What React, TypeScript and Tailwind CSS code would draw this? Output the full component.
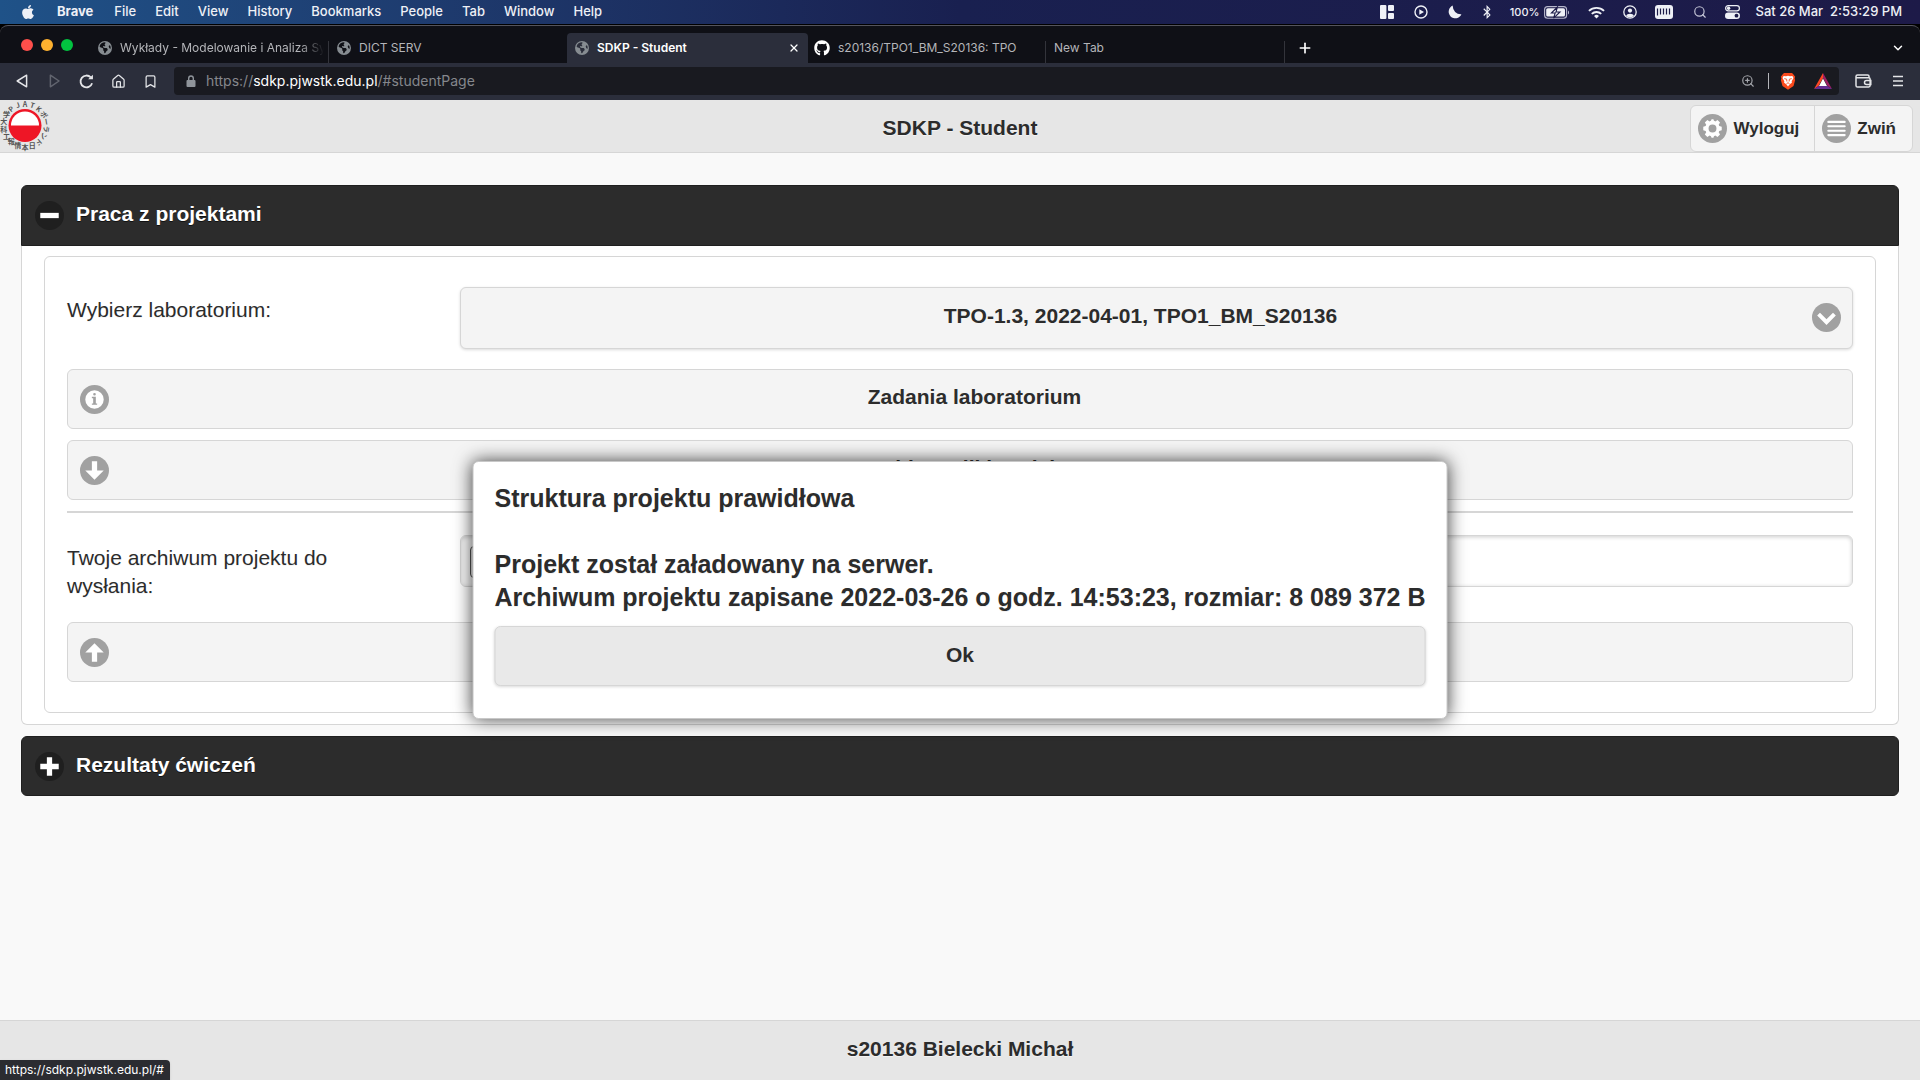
import React from "react";
import { FaApple, FaGithub, FaBluetoothB } from "react-icons/fa";
import { FaEarthAmericas } from "react-icons/fa6";
import {
  Search,
  ZoomIn,
  ChevronDown,
  Plus,
  X,
  Bookmark,
  House,
} from "lucide-react";

const menus = ["File", "Edit", "View", "History", "Bookmarks", "People", "Tab", "Window", "Help"];

function MenuBar() {
  return (
    <div className="flex h-6 items-center justify-between bg-linear-to-r from-[#1f5288] via-[#192050] via-50% to-[#1d1a48] pr-[18px] pl-5 text-[13px] font-medium text-[#eef0f6]">
      <nav className="flex items-center">
        <FaApple className="mr-[21px] size-4" />
        <button className="mr-[21px] font-bold">Brave</button>
        <div className="flex gap-[19px]">
          {menus.map((m) => (
            <button key={m}>{m}</button>
          ))}
        </div>
      </nav>
      <div className="flex items-center">
        <svg viewBox="0 0 14 14" className="mr-5 size-[14px]" fill="currentColor">
          <rect width="6.4" height="14" rx="1" />
          <rect x="8" width="6" height="6" rx="1" />
          <rect x="8" y="8" width="6" height="6" rx="1" />
        </svg>
        <svg viewBox="0 0 14 14" className="mr-5 size-[14px]">
          <circle cx="7" cy="7" r="6" fill="none" stroke="currentColor" strokeWidth="1.4" />
          <path d="M5.3 4.2v5.6L10 7z" fill="currentColor" />
        </svg>
        <svg viewBox="0 0 14 14" className="mr-[18px] size-[14px]" fill="currentColor">
          <path d="M4.800.6A6.600 6.600 0 1 0 13.400 9.200 8 8 0 0 1 4.800.6Z" />
        </svg>
        <FaBluetoothB className="mr-4 size-[14px]" />
        <span className="mr-1 text-[11px]">100%</span>
        <svg viewBox="0 0 26 13" className="mr-[18px] h-[13px] w-[26px]">
          <rect x=".6" y=".6" width="22" height="11.6" rx="3" fill="none" stroke="#b6b7cc" strokeWidth="1.1" />
          <rect x="2.2" y="2.2" width="18.8" height="8.4" rx="1.6" fill="#eef0f6" />
          <path d="M13.4 1 7.4 7h3.8l-1.6 5.2L16 6h-4z" fill="#eef0f6" stroke="#1b1a48" strokeWidth="1.1" />
          <path d="M24 4.4v4c1.4-.5 1.4-3.500 0-4Z" fill="#b6b7cc" />
        </svg>
        <svg viewBox="0 0 18 13" className="mr-[18px] h-[13px] w-[17px]" fill="none" stroke="currentColor" strokeWidth="2">
          <path d="M1 4.800a11.500 11.500 0 0 1 16 0M4 8a7.200 7.200 0 0 1 10 0" />
          <path d="m9 12.800-2.600-2.600a3.800 3.800 0 0 1 5.200 0z" fill="currentColor" stroke="none" />
        </svg>
        <svg viewBox="0 0 14 14" className="mr-[18px] size-[14px]">
          <circle cx="7" cy="7" r="6.200" fill="none" stroke="currentColor" strokeWidth="1.300" />
          <circle cx="7" cy="5.600" r="2.100" fill="currentColor" />
          <path d="M3.200 10.800C3.600 8 10.400 8 10.800 10.800 9 13 5 13 3.200 10.800Z" fill="currentColor" />
        </svg>
        <svg viewBox="0 0 18 14" className="mr-5 h-[14px] w-[18px]">
          <rect width="18" height="14" rx="3" fill="#eef0f6" />
          <path d="M2.500 3.500v7M5.500 3.500v6M8.500 3.500v6M11.500 3.500v6M14.500 3.500v6" stroke="#1b1a48" strokeWidth="1.200" />
        </svg>
        <Search className="mr-[18px] size-[14px] text-[#c6c7d8]" />
        <svg viewBox="0 0 15 14" className="mr-4 h-[14px] w-[15px]">
          <rect x=".6" y=".6" width="13.800" height="5.200" rx="2.600" fill="none" stroke="currentColor" strokeWidth="1.200" />
          <circle cx="3.600" cy="3.200" r="1.700" fill="currentColor" />
          <rect y="7.500" width="15" height="6.500" rx="3.200" fill="currentColor" />
          <circle cx="11.500" cy="10.700" r="1.900" fill="#1b1a48" />
        </svg>
        <span className="whitespace-pre">Sat 26 Mar  2:53:29 PM</span>
      </div>
    </div>
  );
}

function Globe() {
  return <FaEarthAmericas className="size-[14px] shrink-0 text-[#868c91]" />;
}

function TabStrip() {
  return (
    <div className="flex h-[38px] items-end rounded-t-lg border-t border-[#54545c] bg-[#0f1016] text-xs text-[#b4b5b9]">
      <div className="mb-3 flex w-[88px] shrink-0 gap-2 pl-[21px]">
        <span className="size-3 rounded-full bg-[#fe4f4b]" />
        <span className="size-3 rounded-full bg-[#feb12f]" />
        <span className="size-3 rounded-full bg-[#02c340]" />
      </div>
      <div role="tablist" className="flex h-[30px] min-w-0">
        <button role="tab" className="flex w-[240px] items-center gap-2 pr-1 pl-[10px]">
          <Globe />
          <span className="min-w-0 flex-1 overflow-hidden text-left whitespace-nowrap [mask-image:linear-gradient(to_right,black_88%,transparent)]">
            Wykłady - Modelowanie i Analiza Sy
          </span>
        </button>
        <span className="mt-2 w-px bg-[#33343b]" />
        <button role="tab" className="flex w-[238px] items-center gap-2 px-2">
          <Globe />
          DICT SERV
        </button>
        <button role="tab" aria-selected="true" className="flex w-[241px] items-center gap-2 rounded-t bg-[#2b2e3b] px-2 font-semibold text-white">
          <Globe />
          <span className="flex-1 text-left">SDKP - Student</span>
          <X className="size-3" strokeWidth={2.5} />
        </button>
        <button role="tab" className="flex w-[237px] items-center gap-2 px-[6px]">
          <FaGithub className="size-4 text-white" />
          s20136/TPO1_BM_S20136: TPO
        </button>
        <span className="mt-2 w-px bg-[#33343b]" />
        <button role="tab" className="flex w-[238px] items-center px-2">New Tab</button>
        <span className="mt-2 w-px bg-[#33343b]" />
      </div>
      <button aria-label="New tab" className="mb-[7px] ml-3 text-white">
        <Plus className="size-4" strokeWidth={2.5} />
      </button>
      <button aria-label="Search tabs" className="mr-[15px] mb-2 ml-auto text-white">
        <ChevronDown className="size-[14px]" strokeWidth={2.5} />
      </button>
    </div>
  );
}

function Toolbar() {
  return (
    <div className="flex h-[37px] items-center bg-[#2b2e3b] pr-4 pb-px pl-4 text-[#e4e5e8]">
      <button aria-label="Back" className="mr-[18px]">
        <svg viewBox="0 0 14 14" className="size-[14px]" fill="none" stroke="currentColor" strokeWidth="1.500" strokeLinejoin="round">
          <path d="M10.600 1.200v11.600L1.200 7z" />
        </svg>
      </button>
      <button aria-label="Forward" className="mr-[17px] text-[#62656f]">
        <svg viewBox="0 0 14 14" className="size-[14px]" fill="none" stroke="currentColor" strokeWidth="1.500" strokeLinejoin="round">
          <path d="M2.400 1.200v11.600L11 7z" />
        </svg>
      </button>
      <button aria-label="Reload" className="mr-[17px]">
        <svg viewBox="0 0 14 14" className="size-[15px]" fill="none" stroke="currentColor" strokeWidth="1.700">
          <path d="M12.200 8.600A5.500 5.500 0 1 1 11 3.200" />
          <path d="M8.500 4.800H13V.6z" fill="currentColor" stroke="none" />
        </svg>
      </button>
      <button aria-label="Home" className="mr-[17px]">
        <House className="size-[15px]" />
      </button>
      <button aria-label="Bookmark this page" className="mr-4">
        <Bookmark className="size-[15px]" />
      </button>
      <div className="flex h-7 min-w-0 flex-1 items-center rounded bg-[#191a20] pr-[7px] pl-3">
        <svg viewBox="0 0 10 12" className="mr-[10px] h-3 w-[10px] text-[#8f949a]">
          <rect x=".5" y="5" width="9" height="7" rx="1" fill="currentColor" />
          <path d="M2.700 5.500V3.300a2.300 2.300 0 0 1 4.600 0v2.200" fill="none" stroke="currentColor" strokeWidth="1.400" />
        </svg>
        <span className="flex-1 text-sm text-[#85878c]">
          https://<span className="text-white">sdkp.pjwstk.edu.pl</span>/#studentPage
        </span>
        <ZoomIn className="mr-[13px] size-[14px] text-[#a4a6ab]" />
        <span className="mr-[11px] h-4 w-px bg-[#b5b6ba]" />
        <svg viewBox="0 0 16 18" className="mr-[18px] h-[18px] w-4">
          <path d="M4 1h8l1.500 1.400 1.700 2.300-.6 1.600.5 2L13.500 14 8 17.800 2.500 14 .900 8.300l.5-2L.8 4.700l1.700-2.300z" fill="#fb4a1c" />
          <path d="M3.600 4 6 4.300 8 3.700l2 .6 2.400-.3 1.100 2-1.800 3.200.2 1.600-2.200 1.500L8 14.600l-1.700-2.300-2.200-1.500.2-1.600L2.500 6z" fill="#fff" />
          <path d="m4.300 6.600 2.300.6.300 2.300M11.700 6.600l-2.300.6-.3 2.300M6.600 11.500 8 10.800l1.400.7" fill="none" stroke="#fb4a1c" strokeWidth=".9" />
        </svg>
        <svg viewBox="0 0 18 16" className="h-4 w-[18px]">
          <path d="M9 0v5L4.500 13 0 16z" fill="#ff4724" />
          <path d="M9 0l9 16-4.500-3L9 5z" fill="#9e1f63" />
          <path d="M0 16l4.500-3h9L18 16z" fill="#662d91" />
          <path d="M9 5.500 13 13H5z" fill="#fff" />
        </svg>
      </div>
      <button aria-label="Wallet" className="mr-5 ml-4">
        <svg viewBox="0 0 17 14" className="h-[14px] w-[17px]" fill="none" stroke="currentColor" strokeWidth="1.500">
          <path d="M14 3.500V2.300Q14 1 12.600 1H2.500Q1 1 1 2.400v9Q1 13 2.500 13h11.200q1.400 0 1.400-1.400V5q0-1.300-1.400-1.300H1.500" />
          <path d="M15.800 6.500h-4.300a2 2 0 0 0 0 4h4.300z" />
        </svg>
      </button>
      <button aria-label="Menu">
        <svg viewBox="0 0 12 12" className="size-3" stroke="currentColor" strokeWidth="1.500">
          <path d="M1 1.500h10M1 6h10M1 10.500h10" />
        </svg>
      </button>
    </div>
  );
}

const ring = [..."PJATKポーランド日本情報工科大学"];

function Logo() {
  return (
    <svg viewBox="0 0 52 52" className="size-[52px]" role="img" aria-label="PJATK">
      <circle cx="25" cy="25.500" r="16.500" fill="#ee1626" />
      <path d="M11 25.500a14 14 0 0 1 28 0z" fill="#fff" />
      {ring.map((c, i) => {
        const deg = -40 + i * 20;
        const rad = (deg * Math.PI) / 180;
        const turn = i < 10 ? deg : 0;
        return (
          <text
            key={i}
            textAnchor="middle"
            transform={`translate(${25 + 21.5 * Math.sin(rad)} ${25.5 - 21.5 * Math.cos(rad)}) rotate(${turn})`}
            y="2.500"
            className="fill-[#555] font-['Noto_Sans_CJK_JP',sans-serif] text-[7px] font-bold [text-shadow:none]"
          >
            {c}
          </text>
        );
      })}
    </svg>
  );
}

type Kind = "gear" | "bars" | "minus" | "plus" | "info" | "down" | "up" | "carat";

function Icon({ kind }: { kind: Kind }) {
  const dark = kind === "minus" || kind === "plus";
  return (
    <svg viewBox="0 0 22 22" className="size-[29px] shrink-0" aria-hidden="true">
      <circle cx="11" cy="11" r="11" fill={dark ? "#1f1f1f" : "#a1a1a1"} />
      <g transform="translate(4 4)" fill="#fff">
        {kind === "gear" && (
          <path d="M14 8.400V5.600l-1.900-.5a5 5 0 0 0-.4-.9l1-1.700-1.900-1.900-1.700 1a5 5 0 0 0-1-.4L7.700 0H6.300l-.5 1.200a5 5 0 0 0-1 .4l-1.700-1-1.900 1.900 1 1.700-.4.900L0 5.600v2.800l1.800.5.4.9-1 1.700 1.900 1.900 1.700-1 1 .4.500 1.200h1.400l.4-1.200 1-.4 1.700 1 1.900-1.900-1-1.700.4-.9zM7 10a3 3 0 1 1 0-6 3 3 0 0 1 0 6z" />
        )}
        {kind === "bars" && <path d="M.8 1.200h12.400a.8.8 0 0 1 0 1.600H.8a.8.8 0 0 1 0-1.600zm0 3.300h12.400a.8.8 0 0 1 0 1.600H.8a.8.8 0 0 1 0-1.600zm0 3.400h12.400a.8.8 0 0 1 0 1.600H.8a.8.8 0 0 1 0-1.600zm0 3.300h12.400a.8.8 0 0 1 0 1.600H.8a.8.8 0 0 1 0-1.600z" />}
        {kind === "minus" && <path d="M0 5h14v4H0z" />}
        {kind === "plus" && <path d="M14 5H9V0H5v5H0v4h5v5h4V9h5z" />}
        {kind === "info" && (
          <path d="M7 0a7 7 0 1 0 0 14A7 7 0 0 0 7 0zm0 2a1 1 0 1 1 0 2 1 1 0 0 1 0-2zm2 9H5v-1h1V6H5V5h3v5h1z" />
        )}
        {kind === "down" && <path d="M9 7V0H5v7H0l7 7 7-7z" />}
        {kind === "up" && <path d="M7 0 0 7h5v7h4V7h5z" />}
        {kind === "carat" && <path d="M11.949 3.404 7 8.354l-4.950-4.950L-.071 5.525 7 12.596l7.071-7.071z" />}
      </g>
    </svg>
  );
}

function WideButton({ icon, label }: { icon: Kind; label?: string }) {
  return (
    <button className="flex h-[60px] w-full items-center rounded-md border border-[#d6d6d6] bg-[#f4f4f4] px-3 text-[21px] font-bold">
      <Icon kind={icon} />
      {label && <span className="flex-1 pb-[5px]">{label}</span>}
    </button>
  );
}

function SectionHeader({ open, title }: { open: boolean; title: string }) {
  return (
    <button
      aria-expanded={open}
      className={
        "flex w-full items-center gap-3 border border-[#1f1f1f] bg-[#2c2c2c] px-[13px] text-[21px] font-bold text-white [text-shadow:0_1px_0_#111] " +
        (open ? "h-[61px] rounded-t-md" : "h-[60px] rounded-md")
      }
    >
      <Icon kind={open ? "minus" : "plus"} />
      <span className="pb-[3px]">{title}</span>
    </button>
  );
}

export default function App() {
  return (
    <div className="flex min-h-screen flex-col bg-black font-[Inter,sans-serif]">
      <MenuBar />
      <div className="pt-px">
        <TabStrip />
        <Toolbar />
      </div>
      <div className="flex flex-1 flex-col bg-[#f9f9f9] font-['Liberation_Sans',Arial,sans-serif] text-[#2c2c2c] [text-shadow:0_1px_0_#f3f3f3]">
        <header className="grid h-[53px] grid-cols-[1fr_auto_1fr] items-center border-b border-[#d6d6d6] bg-[#e6e6e6]">
          <Logo />
          <h1 className="pt-[3px] text-[21px] font-bold">SDKP - Student</h1>
          <div className="mr-[7px] flex h-[47px] self-end justify-self-end rounded-md border border-[#d6d6d6] bg-[#f4f4f4] text-[17px] font-bold">
            <button className="flex items-center gap-[6px] border-r border-[#d6d6d6] pr-[15px] pl-[7px]">
              <Icon kind="gear" />
              Wyloguj
            </button>
            <button className="flex items-center gap-[6px] pr-4 pl-[7px]">
              <Icon kind="bars" />
              Zwiń
            </button>
          </div>
        </header>

        <main className="relative flex-1 px-[21px] pt-8">
          <section>
            <SectionHeader open title="Praca z projektami" />
            <div className="rounded-b-md border border-t-0 border-[#d6d6d6] bg-white px-[22px] pt-[10px] pb-[11px]">
              <form className="rounded-md border border-[#d6d6d6] px-[22px] py-[30px] text-[21px]">
                <div className="flex">
                  <label htmlFor="lab" className="w-[22%] pt-[9px] leading-7">Wybierz laboratorium:</label>
                  <div className="relative flex-1">
                    <select
                      id="lab"
                      className="block h-[62px] w-full appearance-none rounded-md border border-[#d6d6d6] bg-[#f4f4f4] pr-[60px] pb-[5px] pl-7 text-center font-bold shadow-[0_1px_3px_rgba(0,0,0,0.15)] [text-align-last:center]"
                    >
                      <option>TPO-1.3, 2022-04-01, TPO1_BM_S20136</option>
                    </select>
                    <span className="pointer-events-none absolute top-4 right-3">
                      <Icon kind="carat" />
                    </span>
                  </div>
                </div>
                <div className="mt-5 flex flex-col gap-[11px]">
                  <WideButton icon="info" label="Zadania laboratorium" />
                  <WideButton icon="down" label="Pobierz pliki projektu" />
                </div>
                <hr className="mt-[11px] border-t-2 border-[#d6d6d6]" />
                <div className="mt-[22px] flex">
                  <label htmlFor="archive" className="w-[22%] pt-[9px] pr-20 leading-7">
                    Twoje archiwum projektu do wysłania:
                  </label>
                  <div className="h-[52px] flex-1 rounded-md border border-[#d6d6d6] bg-white px-[9px] pt-[9px] shadow-[inset_0_1px_4px_rgba(0,0,0,0.2)]">
                    <input
                      id="archive"
                      type="file"
                      className="w-full text-lg file:h-8 file:rounded file:border file:border-[#555] file:bg-[#efefef] file:px-2"
                    />
                  </div>
                </div>
                <div className="mt-[22px]">
                  <WideButton icon="up" />
                </div>
              </form>
            </div>
          </section>
          <section className="mt-[11px]">
            <SectionHeader open={false} title="Rezultaty ćwiczeń" />
          </section>

          <div
            role="dialog"
            aria-modal="true"
            className="absolute top-[308px] left-1/2 -translate-x-1/2 rounded-md border border-[#c8c8c8] bg-white px-[21px] pt-5 pb-8 shadow-[0_0_18px_rgba(0,0,0,0.75)]"
          >
            <p className="text-[25px] leading-[33px] font-bold whitespace-nowrap">
              Struktura projektu prawidłowa
              <br />
              <br />
              Projekt został załadowany na serwer.
              <br />
              Archiwum projektu zapisane 2022-03-26 o godz. 14:53:23, rozmiar: 8 089 372 B
            </p>
            <button className="mt-3 h-[60px] w-full rounded-md border border-[#d6d6d6] bg-[#e9e9e9] pb-[3px] text-[21px] font-bold shadow-[0_1px_3px_rgba(0,0,0,0.15)]">
              Ok
            </button>
          </div>
        </main>

        <footer className="relative flex h-[60px] items-center justify-center border-t border-[#d6d6d6] bg-[#e6e6e6]">
          <h2 className="pb-[3px] text-[21px] font-bold">s20136 Bielecki Michał</h2>
          <a
            href="#"
            className="absolute bottom-0 left-0 flex h-5 items-center rounded-tr bg-[#2b2c31] pr-[6px] pl-[5px] font-[Inter,sans-serif] text-xs text-white shadow [text-shadow:none]"
          >
            https://sdkp.pjwstk.edu.pl/#
          </a>
        </footer>
      </div>
    </div>
  );
}
